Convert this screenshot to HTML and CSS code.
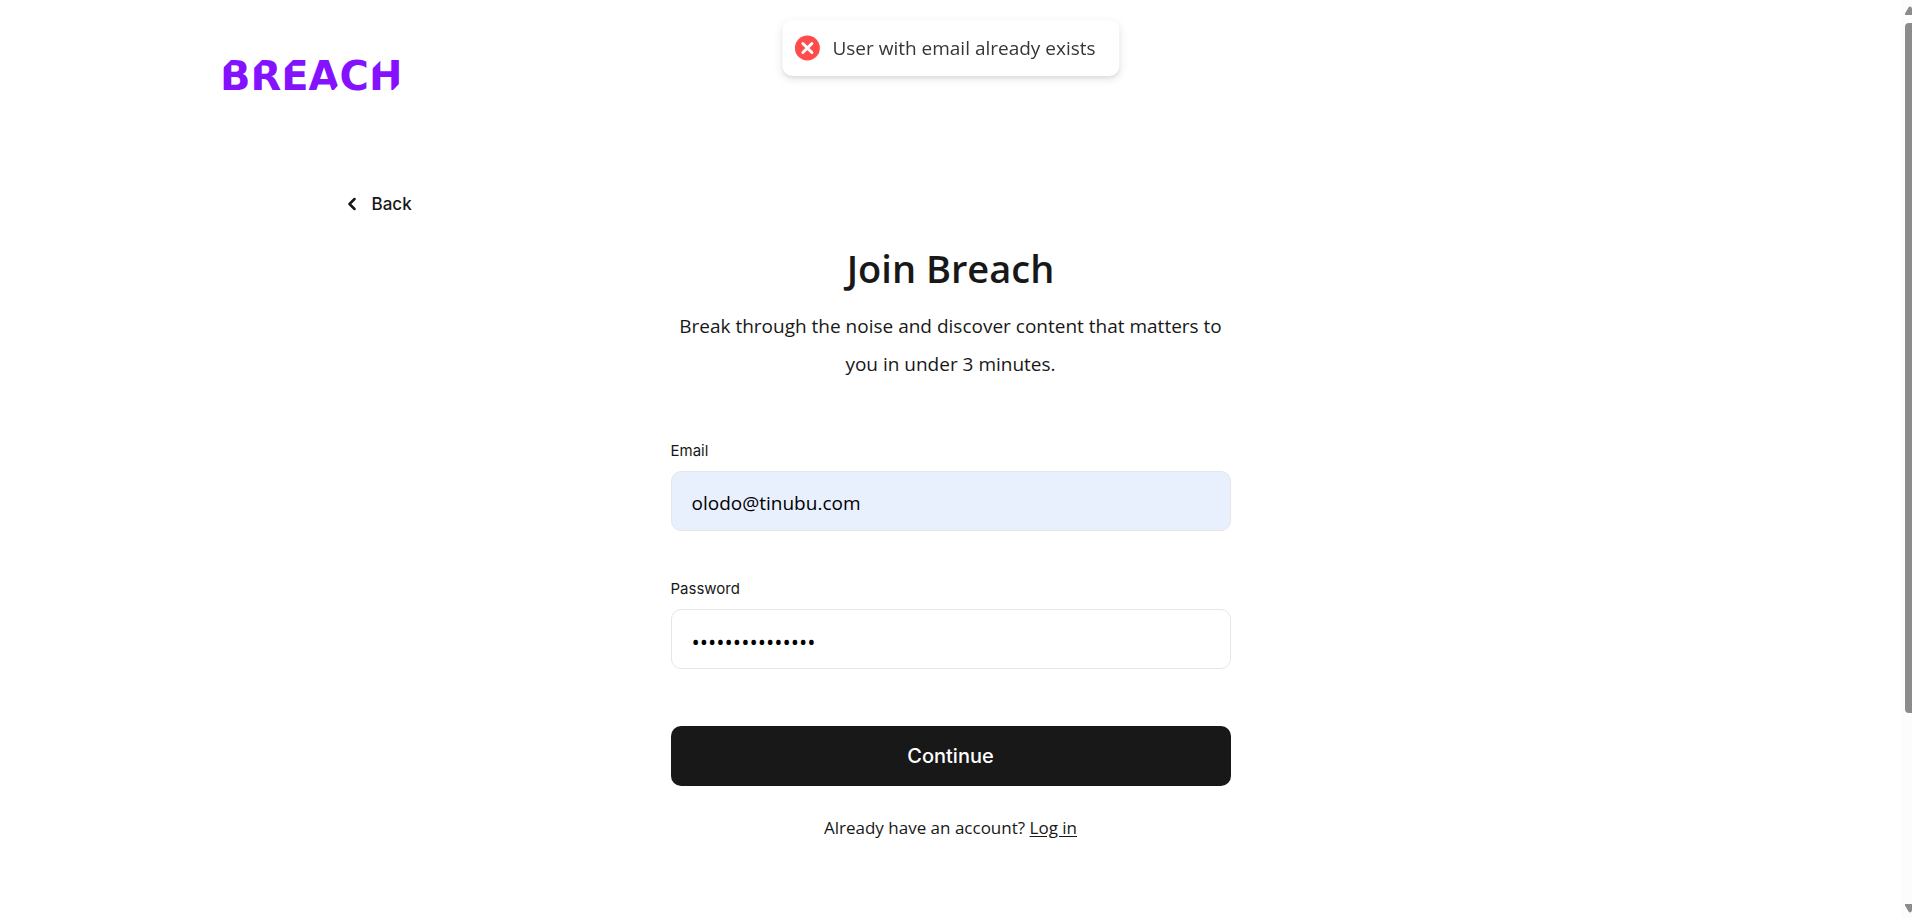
FILE: index.html
```html
<!DOCTYPE html>
<html lang="en">
<head>
<meta charset="utf-8">
<meta name="viewport" content="width=device-width, initial-scale=1">
<title>Join Breach</title>
<link rel="stylesheet" href="styles.css">
</head>
<body>
<div class="page">
  <header class="header">
    <a class="logo" href="#" aria-label="Breach">
      <svg width="192" height="48" viewBox="-4 -8 192 48">
        <text class="logo-text" x="-3" y="30">BREACH</text>
        <path class="logo-cut" d="M0 0H8L0 8ZM31 0H39L31 8ZM61 0H70L61 9ZM149 0H158L149 9ZM177 32H168L177 23ZM117 31H110L117 23Z"/>
      </svg>
    </a>
  </header>
  <main class="main">
    <button class="back" type="button">
      <svg width="8" height="14" viewBox="0 0 8 14" aria-hidden="true"><path class="back-icon" d="M6.500 2L1.500 7L6.500 12"/></svg>
      <span>Back</span>
    </button>
    <form class="form">
      <h1 class="title">Join Breach</h1>
      <p class="lead">Break through the noise and discover content that matters to you in under 3 minutes.</p>
      <div class="field">
        <label class="label" for="email">Email</label>
        <input class="input input-filled" id="email" type="email" value="olodo@tinubu.com">
      </div>
      <div class="field">
        <label class="label" for="password">Password</label>
        <input class="input input-password" id="password" type="password" value="abcdefghijklmno">
      </div>
      <button class="submit" type="button">Continue</button>
      <p class="login">Already have an account? <a class="login-link" href="#">Log in</a></p>
    </form>
  </main>
</div>
<div class="toast" role="status">
  <svg width="26" height="26" viewBox="0 0 26 26" aria-hidden="true"><circle class="toast-disc" cx="13" cy="13" r="12.500"/><path class="toast-cross" d="M8.500 8.500L17.500 17.500M17.500 8.500L8.500 17.500"/></svg>
  <span>User with email already exists</span>
</div>
<div class="scrollbar" aria-hidden="true">
  <svg width="7" height="9" viewBox="0 0 7 9"><path class="scroll-shape" d="M0 9V7.500L3.500 1.500Q5 -0.500 6.500 1.500L7 2.500V9Z"/></svg>
  <div class="scroll-track"><div class="scroll-thumb"></div></div>
  <svg width="7" height="9" viewBox="0 0 7 9"><path class="scroll-shape" d="M0 0V1.500L3.500 7.500Q5 9.500 6.500 7.500L7 6.500V0Z"/></svg>
</div>
</body>
</html>
```
FILE: styles.css
```css
* {
  box-sizing: border-box;
}

body {
  margin: 0;
  background: #fff;
  color: #181818;
  font-family: "Open Sans", "Noto Sans", sans-serif;
}

.page {
  padding-right: 11px;
}

.header {
  max-width: 1464px;
  margin: 0 auto;
  padding-top: 52px;
}

.logo {
  display: block;
  width: 192px;
}

.logo svg {
  display: block;
}

.logo-text {
  font: 700 40px "DejaVu Sans", sans-serif;
  fill: #8412ff;
}

.logo-cut {
  fill: #fff;
}

.main {
  max-width: 1206px;
  margin: 0 auto;
  padding: 92px 0 60px;
}

.back {
  display: flex;
  align-items: center;
  gap: 16px;
  padding: 0;
  border: 0;
  background: none;
  color: #181818;
  font: 500 17px/24px Inter, sans-serif;
}

.back-icon {
  fill: none;
  stroke: #181818;
  stroke-width: 2.500;
  stroke-linecap: round;
  stroke-linejoin: round;
}

.form {
  display: flex;
  flex-direction: column;
  max-width: 560px;
  margin: 28px auto 0;
}

.title {
  margin: 0;
  font-size: 38px;
  font-weight: 600;
  line-height: 48px;
  text-align: center;
}

.lead {
  margin: 15px 0 57px;
  font-size: 19px;
  line-height: 38px;
  text-align: center;
}

.field {
  display: flex;
  flex-direction: column;
  gap: 9px;
  margin-bottom: 47px;
}

.label {
  font: 400 15px/22px Inter, sans-serif;
}

.input {
  width: 100%;
  height: 60px;
  padding: 4px 20px 0;
  border: 1px solid #e6e6e6;
  border-radius: 10px;
  background: #fff;
  color: #000;
  font: 400 19px "Open Sans", "Noto Sans", sans-serif;
}

.input-filled {
  background: #e8f0fe;
}

.input-password {
  font-size: 22px;
}

.submit {
  height: 60px;
  margin-top: 10px;
  border: 0;
  border-radius: 10px;
  background: #181818;
  color: #fff;
  font: 500 20px Inter, sans-serif;
}

.login {
  margin: 28px 0 0;
  font-size: 17px;
  line-height: 28px;
  text-align: center;
}

.login-link {
  color: inherit;
  text-underline-offset: 2px;
}

.toast {
  position: fixed;
  top: 20px;
  left: calc(50% - 5px);
  transform: translateX(-50%);
  display: flex;
  align-items: center;
  gap: 12px;
  height: 56px;
  padding: 0 24px 0 12px;
  border-radius: 10px;
  background: #fff;
  box-shadow: 0 3px 10px rgba(0, 0, 0, 0.1), 0 3px 3px rgba(0, 0, 0, 0.05);
  color: #363636;
  font-size: 19px;
  white-space: nowrap;
}

.toast-disc {
  fill: #ff4b4b;
}

.toast-cross {
  fill: none;
  stroke: #fff;
  stroke-width: 3;
  stroke-linecap: round;
}

.scrollbar {
  position: fixed;
  top: 0;
  right: 0;
  bottom: 0;
  display: flex;
  flex-direction: column;
  align-items: flex-end;
  gap: 8px;
  width: 11px;
  padding: 6px 0 5px;
  background: #fcfcfc;
}

.scroll-shape {
  fill: #8b8b8b;
}

.scroll-track {
  flex: 1;
  width: 7px;
}

.scroll-thumb {
  height: 79%;
  border-radius: 4px 0 0 4px;
  background: #8b8b8b;
}
```
